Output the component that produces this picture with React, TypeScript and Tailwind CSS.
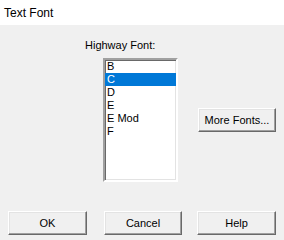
const items = ["B", "C", "D", "E", "E Mod", "F"];

function Btn({ label, className = "" }: { label: string; className?: string }) {
  return (
    <button
      className={`flex h-[24px] items-center justify-center border border-t-[#fff] border-l-[#fff] border-b-[#696969] border-r-[#696969] bg-[#f0f0f0] text-[11px] text-black shadow-[inset_-1px_-1px_0_#a0a0a0,inset_1px_1px_0_#e3e3e3] ${className}`}
    >
      {label}
    </button>
  );
}

export default function App() {
  return (
    <div
      className="flex h-[240px] w-[284px] flex-col bg-white text-black"
      style={{ fontFamily: '"Liberation Sans", Arial, sans-serif' }}
    >
      <div className="flex h-[25px] shrink-0 items-center pl-[4px] text-[12px]">Text Font</div>
      <div className="flex flex-1 flex-col bg-[#f0f0f0]">
        <div className="ml-[85px] mt-[14px] h-[13px] text-[11px] leading-[13px]">Highway Font:</div>
        <div className="mt-[6px] flex items-start">
          <div className="ml-[103px] h-[124px] w-[75px] border-2 border-t-[#a0a0a0] border-l-[#a0a0a0] border-b-[#fff] border-r-[#fff] bg-white shadow-[inset_1px_1px_0_#696969,inset_-1px_-1px_0_#e3e3e3]">
            <div className="flex flex-col">
              {items.map((it) => (
                <div
                  key={it}
                  className={`h-[13px] pl-[2px] text-[11px] leading-[13px] ${
                    it === "C" ? "bg-[#0078d7] text-white" : ""
                  }`}
                >
                  {it}
                </div>
              ))}
            </div>
          </div>
          <Btn label="More Fonts..." className="ml-[20px] mt-[50px] w-[78px]" />
        </div>
        <div className="mt-[29px] flex">
          <Btn label="OK" className="ml-[8px] w-[79px]" />
          <Btn label="Cancel" className="ml-[17px] w-[78px]" />
          <Btn label="Help" className="ml-[15px] w-[79px]" />
        </div>
      </div>
    </div>
  );
}
